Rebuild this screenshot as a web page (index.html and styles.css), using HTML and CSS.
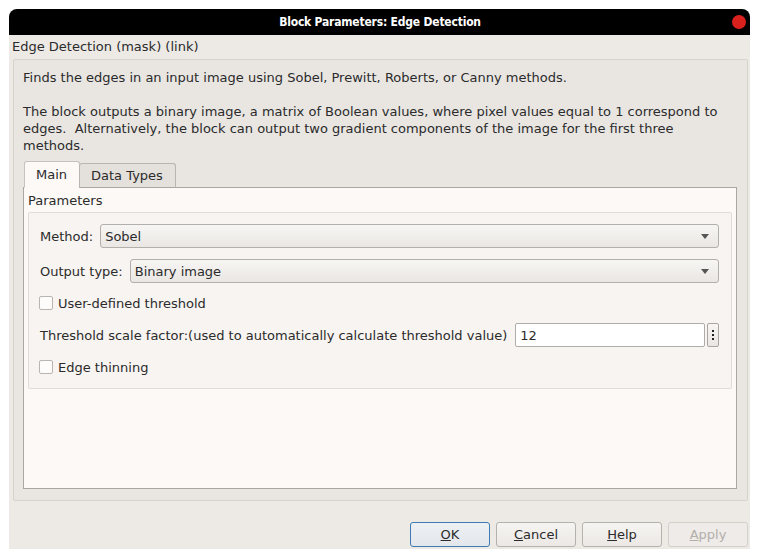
FILE: index.html
```html
<!DOCTYPE html>
<html>
<head>
<meta charset="utf-8">
<link rel="stylesheet" href="styles.css">
</head>
<body>
<div class="window">
  <div class="titlebar">
    <span class="title">Block Parameters: Edge Detection</span>
    <span class="close"></span>
  </div>
  <div class="body">
    <div class="subtitle">Edge Detection (mask) (link)</div>
    <div class="groupbox">
      <div class="desc">Finds the edges in an input image using Sobel, Prewitt, Roberts, or Canny methods.<br><br>The block outputs a binary image, a matrix of Boolean values, where pixel values equal to 1 correspond to<br>edges.&nbsp; Alternatively, the block can output two gradient components of the image for the first three<br>methods.</div>
      <div class="tabs">
        <div class="tab active">Main</div>
        <div class="tab">Data Types</div>
      </div>
      <div class="pane">
        <div class="pane-label">Parameters</div>
        <div class="params">
          <div class="row">
            <span class="label">Method:</span>
            <div class="combo"><span>Sobel</span><span class="arrow"></span></div>
          </div>
          <div class="row">
            <span class="label">Output type:</span>
            <div class="combo"><span>Binary image</span><span class="arrow"></span></div>
          </div>
          <div class="row">
            <span class="check"></span><span class="check-label">User-defined threshold</span>
          </div>
          <div class="row">
            <span class="label">Threshold scale factor:(used to automatically calculate threshold value)</span>
            <div class="input">12</div>
            <div class="more"><span class="dots"></span></div>
          </div>
          <div class="row">
            <span class="check"></span><span class="check-label">Edge thinning</span>
          </div>
        </div>
      </div>
    </div>
    <div class="footer">
      <button class="btn default"><u>O</u>K</button>
      <button class="btn"><u>C</u>ancel</button>
      <button class="btn"><u>H</u>elp</button>
      <button class="btn disabled"><u>A</u>pply</button>
    </div>
  </div>
</div>
</body>
</html>
```

FILE: styles.css
```css
* { box-sizing: border-box; }
html, body { margin: 0; padding: 0; background: #ffffff; }
body {
  font-family: "DejaVu Sans", "Liberation Sans", sans-serif;
  font-size: 13px;
  color: #2b2b2b;
}
.window {
  margin: 9px 0 0 9px;
  width: 741px;
  display: flex;
  flex-direction: column;
}
.titlebar {
  height: 26px;
  background: #000;
  border-radius: 8px 8px 0 0;
  display: flex;
  align-items: center;
  justify-content: center;
  position: relative;
}
.title {
  color: #fff;
  font-family: "DejaVu Sans Condensed", "DejaVu Sans", sans-serif;
  font-weight: bold;
  font-size: 12px;
  letter-spacing: -0.2px;
  margin-left: 1px;
}
.close {
  position: absolute;
  right: 4px;
  top: 6px;
  width: 14px;
  height: 14px;
  border-radius: 50%;
  background: #d8201c;
}
.body {
  height: 514px;
  background: #edeae6;
  display: flex;
  flex-direction: column;
}
.subtitle {
  padding: 3px 0 0 3px;
  line-height: 17px;
  height: 24px;
}
.groupbox {
  margin: 0 2px 0 4px;
  height: 442px;
  background: #e9e6e2;
  border: 1px solid #d6d2cd;
  border-radius: 2px;
  padding: 9px 10px 11px 9px;
  display: flex;
  flex-direction: column;
}
.desc {
  line-height: 17px;
  white-space: nowrap;
}
.tabs {
  display: flex;
  align-items: flex-end;
  margin-top: 7px;
  margin-left: 1px;
  height: 27px;
  position: relative;
  z-index: 1;
  margin-bottom: -1px;
}
.tab {
  height: 25px;
  padding: 0 12px 0 11px;
  display: flex;
  align-items: center;
  background: #e4e0dc;
  border: 1px solid #b9b5b1;
  border-bottom: 1px solid #aaa6a2;
  border-radius: 3px 3px 0 0;
  margin-left: -1px;
}
.tab.active {
  height: 27px;
  background: #fcf9f6;
  border-color: #c6c2be;
  border-bottom-color: #fcf9f6;
  margin-left: 0;
}
.pane {
  flex: 1;
  background: #fcf9f6;
  border: 1px solid #aaa6a2;
  padding: 4px 4px 0 4px;
}
.pane-label {
  line-height: 17px;
  margin-bottom: 3px;
}
.params {
  background: #f7f4f1;
  border: 1px solid #e0dcd8;
  border-radius: 2px;
  padding: 11px 12px 9px 10px;
  display: flex;
  flex-direction: column;
  gap: 8px;
}
.params .row:nth-child(2) { margin-top: 3px; }
.row {
  height: 24px;
  display: flex;
  align-items: center;
}
.label {
  margin-left: 1px;
  margin-right: 7px;
  white-space: nowrap;
}
.combo {
  flex: 1;
  height: 100%;
  border: 1px solid #b3afab;
  border-radius: 3px;
  background: linear-gradient(#f8f6f4, #e9e6e3);
  display: flex;
  align-items: center;
  justify-content: space-between;
  padding: 0 9px 0 4px;
}
.arrow {
  width: 0;
  height: 0;
  border-left: 4px solid transparent;
  border-right: 4px solid transparent;
  border-top: 5px solid #555;
}
.check {
  width: 14px;
  height: 14px;
  border: 1px solid #b8b4b0;
  border-radius: 2px;
  background: #fdfcfb;
  margin-right: 5px;
}
.input {
  flex: 1;
  height: 100%;
  background: #fff;
  border: 1px solid #b0aca8;
  border-radius: 2px;
  display: flex;
  align-items: center;
  padding-left: 4px;
  margin-left: 1px;
}
.more {
  width: 12px;
  height: 100%;
  margin-left: 2px;
  border: 1px solid #a9a5a1;
  border-radius: 2px;
  background: linear-gradient(#f8f6f4, #e9e6e3);
  display: flex;
  align-items: center;
  justify-content: center;
}
.dots {
  width: 2px;
  height: 2px;
  background: #222;
  box-shadow: 0 -4px 0 #222, 0 4px 0 #222;
}
.footer {
  display: flex;
  justify-content: flex-end;
  gap: 6px;
  margin-top: 21px;
  padding-right: 2px;
}
.btn {
  width: 80px;
  height: 25px;
  font-family: "DejaVu Sans", "Liberation Sans", sans-serif;
  font-size: 13px;
  color: #2b2b2b;
  border: 1px solid #b5b1ad;
  border-radius: 3px;
  background: linear-gradient(#f6f4f2, #ebe8e5);
  padding: 0;
}
.btn.default {
  border-color: #3d7cb3;
  background: linear-gradient(#eef1f4, #e3e6ea);
}
.btn.disabled {
  color: #b3afab;
  border-color: #d3cfcb;
  background: #eeebe8;
}
```
